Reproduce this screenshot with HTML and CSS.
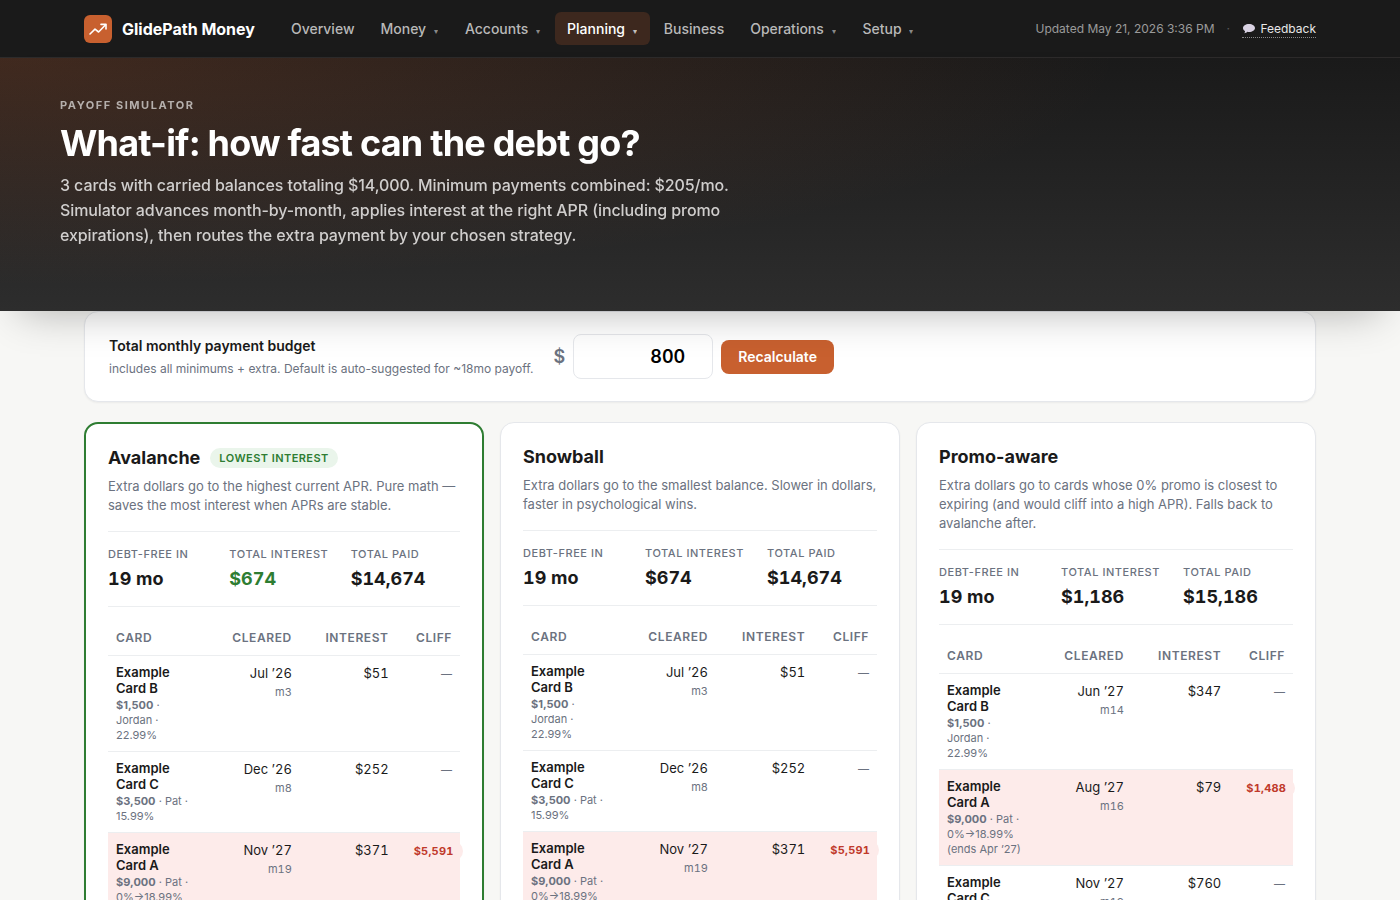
FILE: index.html
```html
<!DOCTYPE html>
<html lang="en">
<head>
    <meta charset="UTF-8">
    <meta name="viewport" content="width=device-width, initial-scale=1.0">
    <title>Payoff Simulator - GlidePath Money</title>
    <link rel="stylesheet" href="styles.css">
</head>
<body>
    <header class="topbar">
        <div class="topbar-inner">
            <a class="brand" href="#">
                <span class="brand-mark">
                    <svg width="20" height="20" viewBox="0 0 20 20" fill="none" stroke="#fff" stroke-width="1.6" stroke-linecap="round" stroke-linejoin="round">
                        <path d="M2 15 L7 10.2 L10.6 13 L17.6 5.8"/>
                        <path d="M13 5.4 H18 V10"/>
                    </svg>
                </span>
                GlidePath Money
            </a>
            <nav class="nav">
                <a href="#">Overview</a>
                <a href="#">Money <span class="caret">▾</span></a>
                <a href="#">Accounts <span class="caret">▾</span></a>
                <a href="#" class="active">Planning <span class="caret">▾</span></a>
                <a href="#">Business</a>
                <a href="#">Operations <span class="caret">▾</span></a>
                <a href="#">Setup <span class="caret">▾</span></a>
            </nav>
            <div class="meta">
                <span>Updated May 21, 2026 3:36 PM</span>
                <span class="dot">·</span>
                <a class="feedback" href="#"><svg class="bubble" width="15" height="11" viewBox="0 0 15 11" fill="#d9d2e3"><path d="M7 1 C10.4 1 13 2.7 13 5 C13 7.3 10.4 9 7 9 C6.4 9 5.8 9 5.3 8.8 C4.5 9.8 3.4 10.2 2.2 10.2 C2.9 9.6 3.1 8.9 3 8.1 C1.7 7.4 1 6.3 1 5 C1 2.7 3.6 1 7 1 Z"/></svg> Feedback</a>
            </div>
        </div>
    </header>

    <section class="hero">
        <div class="eyebrow">Payoff simulator</div>
        <h1>What-if: how fast can the debt go?</h1>
        <p>3 cards with carried balances totaling $14,000. Minimum payments combined: $205/mo. Simulator advances month-by-month, applies interest at the right APR (including promo expirations), then routes the extra payment by your chosen strategy.</p>
    </section>

    <main class="container">
        <form class="card budget">
            <label for="budget">
                <span class="budget-title">Total monthly payment budget</span>
                <span class="budget-help">includes all minimums + extra. Default is auto-suggested for ~18mo payoff.</span>
            </label>
            <div class="budget-controls">
                <span class="currency">$</span>
                <input type="number" id="budget" name="budget" value="800">
                <button type="submit">Recalculate</button>
            </div>
        </form>

        <div class="strategies">
            <article class="card strategy best">
                <div class="strategy-head">
                    <h2>Avalanche</h2>
                    <span class="pill pill-good">LOWEST INTEREST</span>
                </div>
                <p class="desc">Extra dollars go to the highest current APR. Pure math — saves the most interest when APRs are stable.</p>
                <dl class="stats">
                    <div><dt>Debt-free in</dt><dd>19 mo</dd></div>
                    <div><dt>Total interest</dt><dd class="good">$674</dd></div>
                    <div><dt>Total paid</dt><dd>$14,674</dd></div>
                </dl>
                <table>
                    <thead>
                        <tr><th class="col-card">Card</th><th class="col-date">Cleared</th><th class="col-interest">Interest</th><th class="col-cliff">Cliff</th></tr>
                    </thead>
                    <tbody>
                        <tr>
                            <td><div class="name">Example Card B</div><div class="sub"><b>$1,500</b> · Jordan · 22.99%</div></td>
                            <td>Jul ’26<div class="month">m3</div></td>
                            <td>$51</td>
                            <td><span class="none">—</span></td>
                        </tr>
                        <tr>
                            <td><div class="name">Example Card C</div><div class="sub"><b>$3,500</b> · Pat · 15.99%</div></td>
                            <td>Dec ’26<div class="month">m8</div></td>
                            <td>$252</td>
                            <td><span class="none">—</span></td>
                        </tr>
                        <tr class="cliff">
                            <td><div class="name">Example Card A</div><div class="sub"><b>$9,000</b> · Pat · 0%→18.99% (ends Apr ’27)</div></td>
                            <td>Nov ’27<div class="month">m19</div></td>
                            <td>$371</td>
                            <td><span class="pill pill-bad">$5,591</span></td>
                        </tr>
                    </tbody>
                </table>
            </article>

            <article class="card strategy">
                <div class="strategy-head">
                    <h2>Snowball</h2>
                </div>
                <p class="desc">Extra dollars go to the smallest balance. Slower in dollars, faster in psychological wins.</p>
                <dl class="stats">
                    <div><dt>Debt-free in</dt><dd>19 mo</dd></div>
                    <div><dt>Total interest</dt><dd>$674</dd></div>
                    <div><dt>Total paid</dt><dd>$14,674</dd></div>
                </dl>
                <table>
                    <thead>
                        <tr><th class="col-card">Card</th><th class="col-date">Cleared</th><th class="col-interest">Interest</th><th class="col-cliff">Cliff</th></tr>
                    </thead>
                    <tbody>
                        <tr>
                            <td><div class="name">Example Card B</div><div class="sub"><b>$1,500</b> · Jordan · 22.99%</div></td>
                            <td>Jul ’26<div class="month">m3</div></td>
                            <td>$51</td>
                            <td><span class="none">—</span></td>
                        </tr>
                        <tr>
                            <td><div class="name">Example Card C</div><div class="sub"><b>$3,500</b> · Pat · 15.99%</div></td>
                            <td>Dec ’26<div class="month">m8</div></td>
                            <td>$252</td>
                            <td><span class="none">—</span></td>
                        </tr>
                        <tr class="cliff">
                            <td><div class="name">Example Card A</div><div class="sub"><b>$9,000</b> · Pat · 0%→18.99% (ends Apr ’27)</div></td>
                            <td>Nov ’27<div class="month">m19</div></td>
                            <td>$371</td>
                            <td><span class="pill pill-bad">$5,591</span></td>
                        </tr>
                    </tbody>
                </table>
            </article>

            <article class="card strategy">
                <div class="strategy-head">
                    <h2>Promo-aware</h2>
                </div>
                <p class="desc">Extra dollars go to cards whose 0% promo is closest to expiring (and would cliff into a high APR). Falls back to avalanche after.</p>
                <dl class="stats">
                    <div><dt>Debt-free in</dt><dd>19 mo</dd></div>
                    <div><dt>Total interest</dt><dd>$1,186</dd></div>
                    <div><dt>Total paid</dt><dd>$15,186</dd></div>
                </dl>
                <table>
                    <thead>
                        <tr><th class="col-card">Card</th><th class="col-date">Cleared</th><th class="col-interest">Interest</th><th class="col-cliff">Cliff</th></tr>
                    </thead>
                    <tbody>
                        <tr>
                            <td><div class="name">Example Card B</div><div class="sub"><b>$1,500</b> · Jordan · 22.99%</div></td>
                            <td>Jun ’27<div class="month">m14</div></td>
                            <td>$347</td>
                            <td><span class="none">—</span></td>
                        </tr>
                        <tr class="cliff">
                            <td><div class="name">Example Card A</div><div class="sub"><b>$9,000</b> · Pat · 0%→18.99% (ends Apr ’27)</div></td>
                            <td>Aug ’27<div class="month">m16</div></td>
                            <td>$79</td>
                            <td><span class="pill pill-bad">$1,488</span></td>
                        </tr>
                        <tr>
                            <td><div class="name">Example Card C</div><div class="sub"><b>$3,500</b> · Pat · 15.99%</div></td>
                            <td>Nov ’27<div class="month">m19</div></td>
                            <td>$760</td>
                            <td><span class="none">—</span></td>
                        </tr>
                    </tbody>
                </table>
            </article>
        </div>
    </main>
</body>
</html>
```
FILE: styles.css
```css
* { box-sizing: border-box; }

body {
    margin: 0;
    font-family: Inter, "Liberation Sans", sans-serif;
    font-size: 14px;
    line-height: 20px;
    color: #1a1a1a;
    background: #f7f7f5;
}

h1, h2, p, dl, dd { margin: 0; }

/* Top bar */
.topbar {
    background: #1a1a1a;
    border-bottom: 1px solid #2d2b2b;
}
.topbar-inner {
    display: flex;
    align-items: center;
    max-width: 1280px;
    margin: 0 auto;
    padding: 12px 24px;
}
.brand {
    display: flex;
    align-items: center;
    gap: 10px;
    margin-right: 24px;
    color: #fff;
    font-size: 16px;
    font-weight: 700;
    text-decoration: none;
}
.brand-mark {
    display: flex;
    align-items: center;
    justify-content: center;
    width: 28px;
    height: 28px;
    border-radius: 6px;
    background: #c8602f;
}
.nav {
    display: flex;
    gap: 2px;
    flex: 1;
}
.nav a {
    padding: 6px 12px;
    border-radius: 6px;
    color: #b8b8b8;
    font-size: 14px;
    font-weight: 500;
    line-height: 21px;
    text-decoration: none;
}
.nav a.active {
    color: #fff;
    background: #3d281e;
}
.caret {
    margin-left: 4px;
    margin-right: 1px;
    font-size: 8px;
    line-height: 8px;
    opacity: 0.7;
}
.meta {
    display: flex;
    gap: 12px;
    color: #9a9a9a;
    font-size: 12px;
    line-height: 17px;
}
.dot { opacity: 0.5; }
.feedback {
    color: #e8e8e8;
    text-decoration: none;
    border-bottom: 1px dotted #888;
}
.bubble { vertical-align: -1px; }

/* Hero */
.hero {
    position: relative;
    padding: 40px 60px 63px;
    color: #fff;
    background:
        radial-gradient(ellipse 80% 90% at 0% 0%, rgba(200, 96, 47, 0.22), transparent),
        linear-gradient(180deg, #1a1a1a 0%, #2d2d2d 100%);
    box-shadow: 0 20px 40px -20px rgba(0, 0, 0, 0.3);
    will-change: transform;
}
.eyebrow {
    color: #b5afac;
    font-size: 11px;
    font-weight: 700;
    line-height: 15px;
    letter-spacing: 0.14em;
    text-transform: uppercase;
}
.hero h1 {
    margin: 8px 0;
    font-size: 36px;
    font-weight: 700;
    line-height: 44px;
    letter-spacing: -0.022em;
}
.hero p {
    max-width: 680px;
    color: #d0cecd;
    font-size: 16px;
    font-weight: 500;
    line-height: 25px;
    letter-spacing: -0.006em;
}

.container {
    max-width: 1280px;
    margin: 0 auto;
    padding: 0 24px 40px;
}
.card {
    background: #fff;
    border: 1px solid #e5e7eb;
    border-radius: 14px;
    box-shadow: 0 1px 2px rgba(0, 0, 0, 0.05);
}

/* Budget form */
.budget {
    display: flex;
    align-items: center;
    gap: 20px;
    padding: 22px 24px;
    margin-bottom: 20px;
}
.budget label { padding-top: 2px; }
.budget-title {
    display: block;
    font-size: 14px;
    font-weight: 600;
}
.budget-help {
    display: block;
    margin-top: 3px;
    color: #6b7280;
    font-size: 12px;
}
.budget-controls {
    display: flex;
    align-items: center;
    gap: 8px;
}
.currency {
    color: #6b7280;
    font-size: 18px;
    font-weight: 600;
}
.budget input {
    width: 140px;
    height: 45px;
    padding: 8px 12px;
    border: 1px solid #e5e7eb;
    border-radius: 8px;
    background: #fff;
    font-family: inherit;
    font-size: 18px;
    font-weight: 600;
    text-align: right;
    font-variant-numeric: tabular-nums;
}
.budget button {
    height: 34px;
    padding: 0 17px;
    border: none;
    border-radius: 8px;
    background: #c8602f;
    color: #fff;
    font-family: inherit;
    font-size: 14px;
    font-weight: 600;
    cursor: pointer;
}

/* Strategy cards */
.strategies {
    display: grid;
    grid-template-columns: repeat(3, 1fr);
    align-items: start;
    gap: 16px;
}
.strategy { padding: 22px; }
.strategy.best { border: 2px solid #2e7d32; }
.strategy-head {
    display: flex;
    align-items: center;
    gap: 10px;
    margin-bottom: 8px;
}
.strategy h2 {
    font-size: 18px;
    font-weight: 700;
    line-height: 23px;
}
.pill {
    display: inline-block;
    padding: 2px 9px;
    border-radius: 10px;
    font-size: 11px;
    font-weight: 600;
    line-height: 16px;
    white-space: nowrap;
}
.pill-good {
    color: #2e7d32;
    background: #eaf5eb;
    letter-spacing: 0.04em;
}
.pill-bad {
    color: #c0392b;
    background: #fdebea;
    font-weight: 700;
    letter-spacing: 0.02em;
}
.desc {
    color: #6b7280;
    font-size: 13px;
    line-height: 19px;
}
.stats {
    display: grid;
    grid-template-columns: repeat(3, 1fr);
    gap: 12px;
    margin: 16px 0 14px;
    padding: 14px 0 16px;
    border-top: 1px solid #eceef0;
    border-bottom: 1px solid #eceef0;
}
.stats dt {
    color: #6b7280;
    font-size: 11px;
    font-weight: 500;
    line-height: 17px;
    letter-spacing: 0.05em;
    text-transform: uppercase;
    white-space: nowrap;
}
.stats dd {
    margin-top: 4px;
    font-size: 18px;
    font-weight: 700;
    line-height: 23px;
    font-variant-numeric: tabular-nums;
}
.stats dd.good { color: #2e7d32; }

table {
    width: 100%;
    table-layout: fixed;
    border-collapse: collapse;
    font-size: 13px;
}
.col-card { width: 27%; }
.col-date { width: 27.5%; }
.col-interest { width: 27.5%; }
.col-cliff { width: 18%; }
th {
    padding: 8px;
    color: #6b7280;
    font-size: 12px;
    font-weight: 600;
    line-height: 18px;
    letter-spacing: 0.05em;
    text-align: right;
    text-transform: uppercase;
    border-bottom: 1px solid #eceef0;
}
td {
    padding: 8px;
    line-height: 19px;
    text-align: right;
    vertical-align: top;
    font-variant-numeric: tabular-nums;
    border-bottom: 1px solid #eceef0;
}
th:first-child, td:first-child {
    text-align: left;
    font-variant-numeric: normal;
}
tr.cliff { background: #fdebea; }
.name {
    font-weight: 600;
    line-height: 16px;
}
.sub {
    margin-top: 2px;
    color: #6b7280;
    font-size: 11px;
    line-height: 15px;
}
.month {
    color: #6b7280;
    font-size: 11px;
}
.none {
    color: #6b7280;
    font-size: 11px;
}
```
